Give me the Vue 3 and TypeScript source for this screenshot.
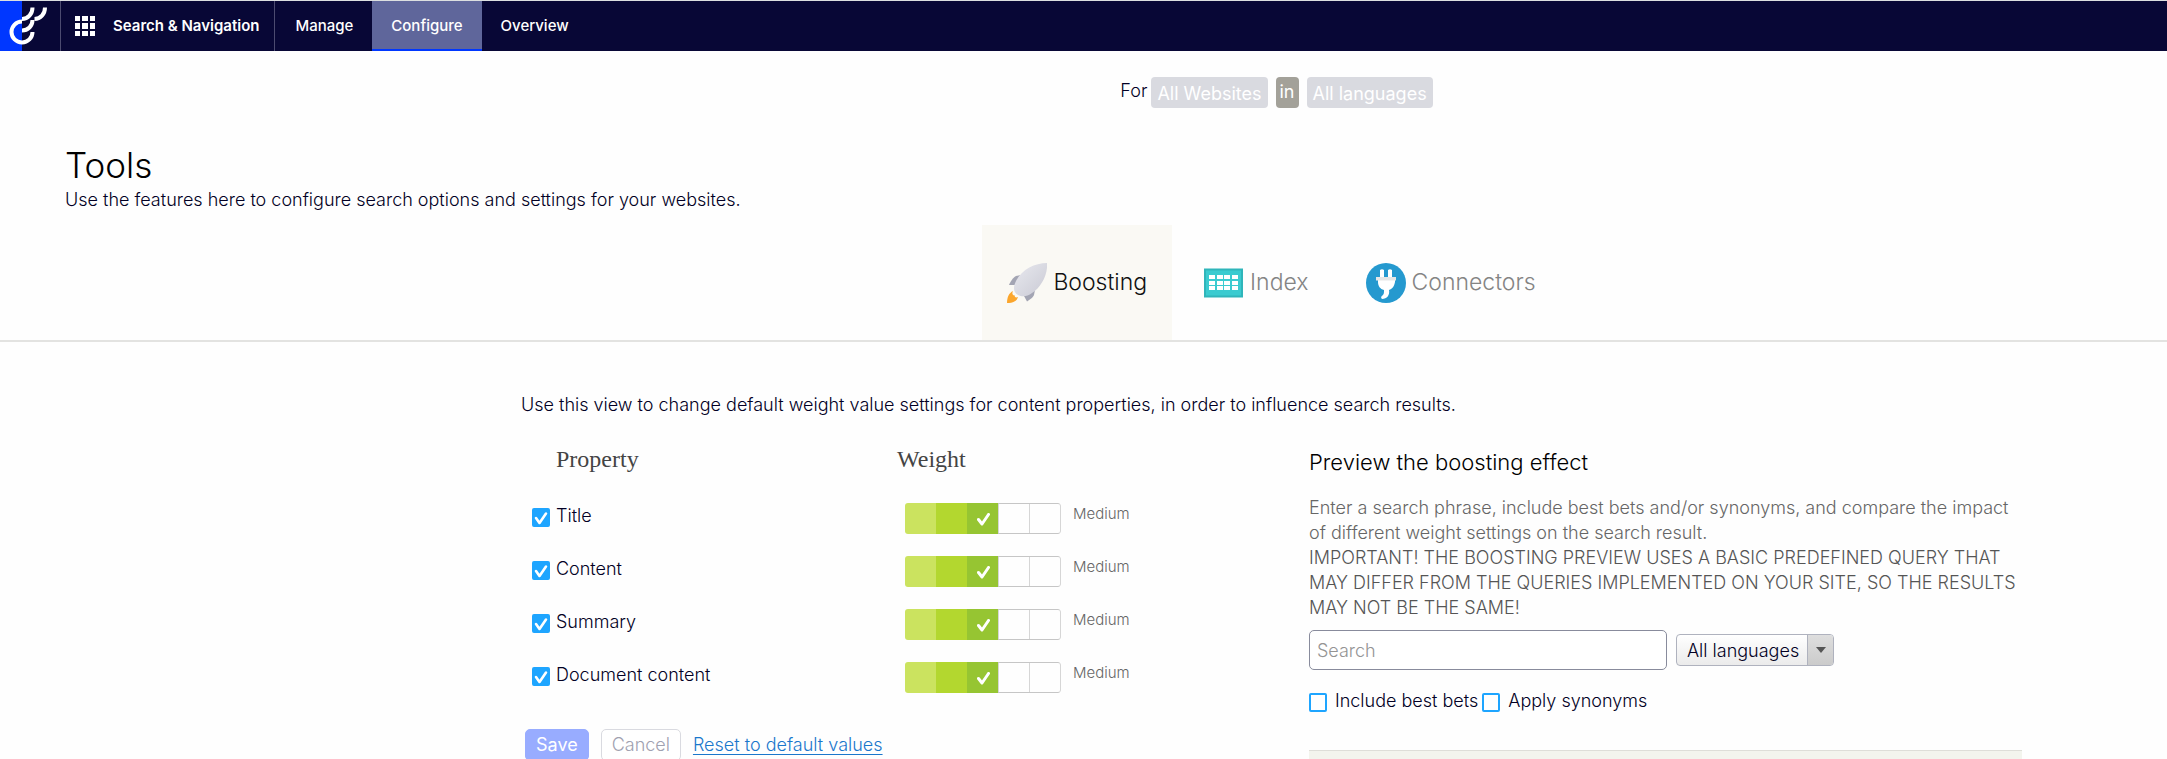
<script setup lang="ts">
import { reactive, ref } from 'vue'

interface Property {
  id: string
  name: string
  enabled: boolean
  weight: number
}

const properties = reactive<Property[]>([
  { id: 'title', name: 'Title', enabled: true, weight: 3 },
  { id: 'content', name: 'Content', enabled: true, weight: 3 },
  { id: 'summary', name: 'Summary', enabled: true, weight: 3 },
  { id: 'document', name: 'Document content', enabled: true, weight: 3 },
])
const levels = ['Very low', 'Low', 'Medium', 'High', 'Very high']
const navItems = ['Manage', 'Configure', 'Overview']
const activeNav = ref('Configure')
const search = ref('')
const language = ref('All languages')
const bestBets = ref(false)
const synonyms = ref(false)
</script>

<template>
  <div class="page">
    <header class="topbar">
      <a href="#" class="logo" aria-label="Home">
        <svg width="60" height="50" viewBox="0 0 60 50">
          <rect width="22" height="50" fill="#0037ff" />
          <g fill="none" stroke="#fff" stroke-width="4">
            <path d="M22 20.500A10.500 10.500 0 1 0 32.500 31" />
            <path d="M22 29.500C28 29.500 32.500 25 32.500 19" />
            <path d="M22 18C28 18 32.500 13 32.500 6.500" />
            <path d="M34.500 18C40.500 18 45 13 45 6.500" />
          </g>
        </svg>
      </a>
      <button type="button" class="product">
        <svg width="20" height="20" viewBox="0 0 20 20" fill="#fff">
          <path d="M0 0h5v5H0zM7 0h6v5H7zM15 0h5v5h-5zM0 7h5v6H0zM7 7h6v6H7zM15 7h5v6h-5zM0 15h5v5H0zM7 15h6v5H7zM15 15h5v5h-5z" />
        </svg>
        <span>Search &amp; Navigation</span>
      </button>
      <nav class="nav">
        <a
          v-for="item in navItems"
          :key="item"
          href="#"
          :class="['nav-item', { active: item === activeNav }]"
          @click.prevent="activeNav = item"
        >{{ item }}</a>
      </nav>
    </header>

    <div class="filters">
      <span class="for">For</span>
      <button type="button" class="pill">All Websites</button>
      <span class="in">in</span>
      <button type="button" class="pill">All languages</button>
    </div>

    <section class="intro">
      <h1>Tools</h1>
      <p>Use the features here to configure search options and settings for your websites.</p>
    </section>

    <nav class="tabs">
      <a href="#" class="tab selected">
        <svg width="40" height="40" viewBox="0 0 40 40">
          <defs>
            <linearGradient id="hull" x1="0" y1="0" x2="1" y2="1">
              <stop offset="0" stop-color="#e9e9ef" />
              <stop offset="1" stop-color="#c9cad4" />
            </linearGradient>
          </defs>
          <path d="M14 12L9 13C7 13.500 3 19 2 22L8 22z" fill="#a3a5b3" />
          <path d="M28 27L27 32C26 35 22 37 20 38.500L17 33z" fill="#a3a5b3" />
          <path d="M6 28C2 30 0 34 0 40C6 40 10 38 11 34C9 35 7 34 8 32.500C5 32.500 5 30 6 28z" fill="#fba62c" />
          <path d="M40 0C41 12 34 24 25 30C20 34 15 34 11 32C6 29 6 24 9 18C15 6 28 0 40 0z" fill="url(#hull)" />
        </svg>
        <span>Boosting</span>
      </a>
      <a href="#" class="tab">
        <svg width="40" height="40" viewBox="0 0 40 40">
          <path d="M1 6.500h37v27H1z" fill="#3acbd0" stroke="#2fb5ba" stroke-width="2" />
          <g fill="#fff">
            <path v-for="y in [12, 18, 23]" :key="y" :d="`M5 ${y}h6v4H5zM13 ${y}h6v4h-6zM20 ${y}h6v4h-6zM28 ${y}h6v4h-6z`" />
          </g>
        </svg>
        <span>Index</span>
      </a>
      <a href="#" class="tab">
        <svg width="40" height="40" viewBox="0 0 40 40">
          <circle cx="20" cy="20" r="20" fill="#2599cf" />
          <path d="M14 7q2-1.500 4 0v7h-4zM22 7q2-1.500 4 0v7h-4z" fill="#fff" />
          <path d="M12 17h17v2C28 24 26 26 23 27C24 32 21 36 16 36C14.500 35 15 33 17 32C18 31 18 29 18 27C14 26 12 23 12 19z" fill="#fff" />
          <path d="M10 14h20v3.500H10z" fill="#e6e6e6" />
        </svg>
        <span>Connectors</span>
      </a>
    </nav>

    <main class="content">
      <p class="lead">Use this view to change default weight value settings for content properties, in order to influence search results.</p>
      <div class="columns">
        <form class="weights" @submit.prevent>
          <div class="row head">
            <h2>Property</h2>
            <h2 class="weight-head">Weight</h2>
          </div>
          <div v-for="p in properties" :key="p.id" class="row">
            <label class="check">
              <input v-model="p.enabled" type="checkbox" />
              <span>{{ p.name }}</span>
            </label>
            <div class="meter" role="radiogroup" :aria-label="p.name + ' weight'">
              <label v-for="(level, i) in levels" :key="level" :class="['step', i < p.weight ? 'fill' + (i + 1) : '']">
                <input v-model="p.weight" type="radio" :name="p.id" :value="i + 1" :aria-label="level" />
                <svg v-if="p.weight === i + 1" width="13" height="13" viewBox="0 0 13 13">
                  <path d="M1.500 6.500L5 11L11.500 1.500" fill="none" stroke="#fff" stroke-width="3" stroke-linecap="round" stroke-linejoin="round" />
                </svg>
              </label>
            </div>
            <span class="level">{{ levels[p.weight - 1] }}</span>
          </div>
          <div class="actions">
            <button type="submit" class="save">Save</button>
            <button type="button" class="cancel">Cancel</button>
            <a href="#">Reset to default values</a>
          </div>
        </form>

        <section class="preview">
          <h3>Preview the boosting effect</h3>
          <p>Enter a search phrase, include best bets and/or synonyms, and compare the impact of different weight settings on the search result.</p>
          <p class="important">IMPORTANT! THE BOOSTING PREVIEW USES A BASIC PREDEFINED QUERY THAT MAY DIFFER FROM THE QUERIES IMPLEMENTED ON YOUR SITE, SO THE RESULTS MAY NOT BE THE SAME!</p>
          <div class="search-row">
            <input v-model="search" type="text" class="search" placeholder="Search" aria-label="Search" />
            <div class="select">
              <select v-model="language" aria-label="Language">
                <option>All languages</option>
              </select>
              <span class="arrow"><svg width="10" height="6" viewBox="0 0 10 6"><path d="M0 0h10L5 6z" fill="#555" /></svg></span>
            </div>
          </div>
          <div class="options">
            <label class="check"><input v-model="bestBets" type="checkbox" /><span>Include best bets</span></label>
            <label class="check"><input v-model="synonyms" type="checkbox" /><span>Apply synonyms</span></label>
          </div>
          <div class="results"></div>
        </section>
      </div>
    </main>
  </div>
</template>

<style>
body {
  background: #fefefe;
}
</style>

<style scoped>
* {
  box-sizing: border-box;
}
.page {
  height: 100vh;
  overflow: hidden;
  font: 300 18px/25px Inter, "Liberation Sans", sans-serif;
  color: #020024;
}
h1, h2, h3, p {
  margin: 0;
  font-weight: 300;
}
button, input, select {
  font: inherit;
  margin: 0;
}
a {
  text-decoration: none;
}
.topbar {
  display: flex;
  height: 51px;
  border-top: 1px solid #dcdfe0;
  background: #080736;
  font-size: 15px;
}
.logo {
  display: flex;
  width: 61px;
  border-right: 1px solid #4c4b70;
}
.product {
  display: flex;
  align-items: center;
  gap: 18px;
  padding: 0 15px 0 14px;
  border: 0;
  border-right: 1px solid #4c4b70;
  background: none;
  color: #fff;
  font-weight: 600;
  white-space: nowrap;
}
.product span {
  padding-bottom: 2px;
}
.nav {
  display: flex;
  padding-left: 1px;
}
.nav-item {
  display: flex;
  align-items: center;
  padding: 0 19px;
  border-bottom: 2px solid transparent;
  color: #fff;
  font-weight: 500;
}
.nav-item.active {
  background: #5f669b;
  border-color: #0037ff;
}
.filters {
  display: flex;
  justify-content: center;
  align-items: center;
  gap: 8px;
  margin-top: 25px;
  padding-left: 386px;
  height: 32px;
}
.for {
  margin-right: -4px;
  padding-bottom: 3px;
}
.pill, .in {
  height: 31px;
  border: 0;
  border-radius: 4px;
  color: #fff;
}
.pill {
  padding: 3px 6px 0;
  background: #d9dae0;
  font-weight: 400;
}
.in {
  padding: 2px 4px;
  background: #a3a199;
  font-weight: 400;
}
.intro {
  padding: 36px 65px 0;
}
h1 {
  font-size: 35px;
  line-height: 43px;
  color: #000;
}
.tabs {
  display: flex;
  justify-content: center;
  gap: 7px;
  margin-top: 13px;
  padding-left: 376px;
  border-bottom: 2px solid #e3e3e1;
}
.tab {
  display: flex;
  align-items: center;
  gap: 6px;
  height: 115px;
  padding: 0 25px;
  color: #848484;
  font-size: 23px;
}
.tab.selected {
  background: #faf9f4;
  color: #111;
}
.content {
  padding: 50px 145px 0 521px;
}
.columns {
  display: grid;
  grid-template-columns: 788fr 713fr;
  margin-top: 24px;
}
.row {
  display: flex;
  align-items: flex-start;
  height: 53px;
}
.row.head {
  height: 62px;
}
h2 {
  width: 340px;
  padding-left: 35px;
  color: #444;
  font: 400 24px/36px "Liberation Serif", serif;
}
.weight-head {
  padding-left: 36px;
}
.check {
  display: flex;
  align-items: flex-start;
  gap: 6px;
}
.row .check {
  width: 384px;
  padding-left: 11px;
}
.check input {
  appearance: none;
  flex: none;
  width: 18px;
  height: 19px;
  margin-top: 5px;
  border: 2px solid #1ea5ff;
  border-radius: 2px;
  background: #fff;
}
.check input:checked {
  background: #1ea5ff url("data:image/svg+xml,%3Csvg xmlns='http://www.w3.org/2000/svg' viewBox='0 0 14 14'%3E%3Cpath d='M2 7l3.500 5L12 2.500' fill='none' stroke='white' stroke-width='2.600' stroke-linecap='round' stroke-linejoin='round'/%3E%3C/svg%3E") center / 14px no-repeat;
}
.meter {
  display: flex;
  width: 156px;
  height: 31px;
  border-radius: 3px;
  overflow: hidden;
}
.step {
  display: flex;
  flex: 1;
  align-items: center;
  justify-content: center;
  padding: 2px 0 0 2px;
  border: solid #c6c6c6;
  border-width: 1px 0;
  box-shadow: inset 1px 0 #d6d6d6;
}
.step:last-child {
  border-right: 1px solid #d6d6d6;
  border-radius: 0 3px 3px 0;
}
.step input {
  position: absolute;
  opacity: 0;
}
.fill1, .fill2, .fill3, .fill4, .fill5 {
  border: 0;
  box-shadow: none;
}
.fill1 {
  background: #cbe35f;
}
.fill2 {
  background: #b3d72f;
}
.fill3, .fill4, .fill5 {
  background: #96c532;
}
.level {
  margin-left: 12px;
  color: #666;
  font-size: 15px;
  line-height: 21px;
}
.actions {
  display: flex;
  gap: 12px;
  padding: 14px 4px 0;
}
.actions button {
  height: 32px;
  padding: 0 10px;
  border: 1px solid #98acff;
  border-radius: 5px;
  line-height: 30px;
}
.actions .save {
  background: #98acff;
  color: #fff;
  font-weight: 400;
}
.actions .cancel {
  border-color: #d9dae0;
  background: #fff;
  color: #a0a1b0;
}
.actions a {
  line-height: 32px;
  color: #1a77cc;
  text-decoration: underline;
  text-underline-offset: 3px;
}
.preview h3 {
  margin-bottom: 12px;
  color: #000;
  font-size: 22px;
  line-height: 42px;
}
.preview p {
  color: #666;
}
.preview .important {
  color: #555;
}
.search-row {
  display: flex;
  align-items: center;
  gap: 9px;
  margin-top: 10px;
}
.search {
  width: 358px;
  height: 40px;
  padding: 0 7px;
  border: 1px solid #888b9c;
  border-radius: 5px;
  background: #fff;
  color: #020024;
}
.search::placeholder {
  color: #949494;
}
.select {
  display: flex;
  position: relative;
}
select {
  appearance: none;
  height: 32px;
  padding: 0 33px 0 10px;
  border: 1px solid #afb2be;
  border-radius: 4px;
  background: linear-gradient(#fff, #ebebeb);
  color: #020024;
}
.arrow {
  display: flex;
  align-items: center;
  justify-content: center;
  position: absolute;
  inset: 1px 1px 1px auto;
  width: 26px;
  border-left: 1px solid #afb2be;
  border-radius: 0 3px 3px 0;
  background: linear-gradient(#dedede, #cbcbcb);
  pointer-events: none;
}
.options {
  display: flex;
  gap: 4px;
  margin-top: 18px;
}
.options .check {
  gap: 8px;
}
.results {
  height: 60px;
  margin-top: 37px;
  border-top: 1px solid #deded8;
  background: #f3f4ed;
}
</style>
